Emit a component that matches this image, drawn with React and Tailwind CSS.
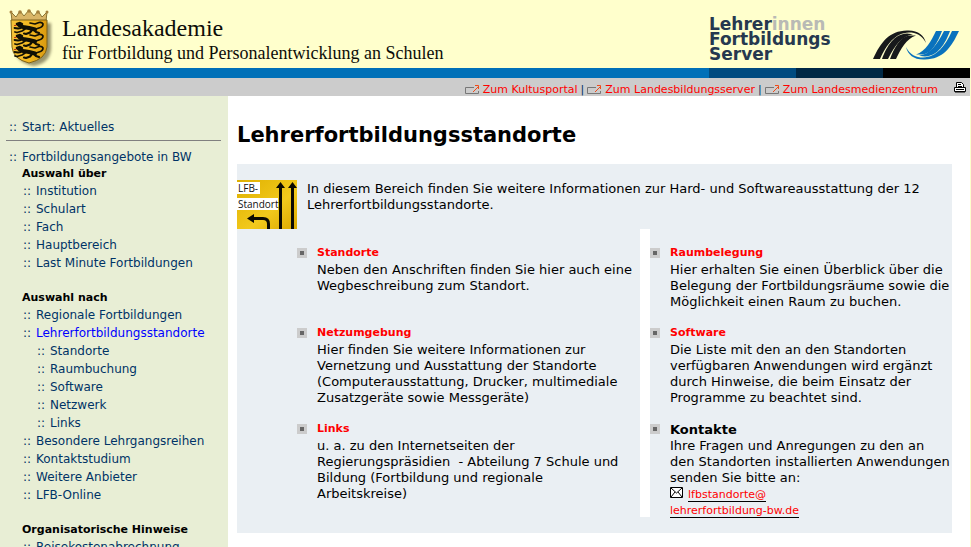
import React from "react";

const overview = ["Institution", "Schulart", "Fach", "Hauptbereich", "Last Minute Fortbildungen"];

const selection = [
  { label: "Regionale Fortbildungen" },
  {
    label: "Lehrerfortbildungsstandorte",
    active: true,
    children: ["Standorte", "Raumbuchung", "Software", "Netzwerk", "Links"],
  },
  { label: "Besondere Lehrgangsreihen" },
  { label: "Kontaktstudium" },
  { label: "Weitere Anbieter" },
  { label: "LFB-Online" },
];

const portals = ["Zum Kultusportal", "Zum Landesbildungsserver", "Zum Landesmedienzentrum"];

function Lion({ y }) {
  return (
    <g transform={`translate(0 ${y})`} fill="none" stroke="#111004" strokeLinecap="round" strokeLinejoin="round">
      <path d="M11 4 L15 6 L21 7 L27 8.500" strokeWidth="4" />
      <path d="M9 3 L12 2 L14 3" strokeWidth="2.500" />
      <path d="M13 7 L10 7.500 L6.500 7 M17 8 L14 10 L9 11.500 L7 11" strokeWidth="1.800" />
      <path d="M26 9 L28 11 L31 12 M24 9 L22 11.500 L18 13 L16 12.500" strokeWidth="2.200" />
      <path d="M28 8 L31 7 Q35 6 35 3 Q34 1 31 1.500 L27 3 L22 2" strokeWidth="1.700" />
      <path d="M6.500 4.500 L8 4.500" stroke="#c22d16" strokeWidth="1" />
    </g>
  );
}

function CoatOfArms() {
  return (
    <svg width="46" height="60" viewBox="0 0 46 60" aria-hidden="true">
      <defs>
        <linearGradient id="shield" x1="0" x2="1">
          <stop offset="0" stopColor="#f6c33a" />
          <stop offset="0.5" stopColor="#f4b91f" />
          <stop offset="1" stopColor="#d99a10" />
        </linearGradient>
        <filter id="soft" x="-20%" y="-20%" width="140%" height="140%">
          <feGaussianBlur stdDeviation="1.6" />
        </filter>
      </defs>
      <path d="M7 15 H43 V41 Q42 55 26 58 Q10 55 7 44 Z" fill="#77724e" opacity="0.75" filter="url(#soft)" />
      <path
        d="M4 13 L3 4 L8 9 L12 3 L16 8 L21 2 L26 8 L30 3 L34 9 L39 4 L38 13 Z"
        fill="#d9b566"
        stroke="#8b7431"
        strokeWidth="1"
      />
      <g fill="#a5803a">
        <circle cx="3" cy="4" r="1.500" />
        <circle cx="12" cy="4" r="1.800" />
        <circle cx="21" cy="3" r="1.800" />
        <circle cx="30" cy="4" r="1.800" />
        <circle cx="39" cy="4" r="1.500" />
      </g>
      <path d="M3 12 H39 V39 Q38 51 21 55 Q5 51 4 39 Z" fill="url(#shield)" stroke="#7c6118" strokeWidth="1" />
      <Lion y={13} />
      <Lion y={25} />
      <Lion y={37} />
    </svg>
  );
}

function SwooshHalf() {
  return (
    <>
      <path d="M0 29 C8 12 16 1 34 0.500 C45 0 51 5 53 13 C49 5 43 2.500 36 2.500 C22 3 14 14 7 29 Z" />
      <path d="M9 29 C14 16 21 4 34 3.500 L40 4.200 C29 6 22 15 15 29 Z" />
      <path d="M17 29 C21 18 27 7 36 5.500 L43 5.500 C33 9 28 19 23 29 Z" />
    </>
  );
}

function Swoosh() {
  return (
    <svg width="88" height="32" viewBox="0 0 88 32" aria-hidden="true">
      <g fill="#17191b">
        <SwooshHalf />
      </g>
      <g fill="#0a72bd" transform="rotate(180 43 15)">
        <SwooshHalf />
      </g>
    </svg>
  );
}

function ExternalIcon() {
  return (
    <svg width="15" height="10" viewBox="0 0 15 10" className="shrink-0" aria-hidden="true">
      <path d="M9 2.500 H0.500 V8.500 H13.500 V6" fill="none" stroke="#777" />
      <path d="M8 7 L13 2 M10 0.500 H13.500 V4" fill="none" stroke="#f04a18" />
    </svg>
  );
}

function PrinterIcon() {
  return (
    <svg width="12" height="11" viewBox="0 0 12 11" aria-hidden="true">
      <path d="M2.500 5 V0.500 H7.500 L9.500 2.500 V5" fill="#fff" stroke="#000" />
      <path d="M4 2.500 h3 M4 4.500 h4" stroke="#000" />
      <path d="M0.500 5.500 H11.500 V9.500 H0.500 Z" fill="#fff" stroke="#000" />
      <path d="M2 7.500 H10 M1 10 H11" stroke="#000" />
    </svg>
  );
}

function MailIcon() {
  return (
    <svg width="13" height="11" viewBox="0 0 13 11" className="mr-[5px] inline-block align-baseline" aria-hidden="true">
      <path d="M0.500 0.500 H12.500 V10.500 H0.500 Z" fill="#fff" stroke="#000" />
      <path d="M1 1 L6.500 6 L12 1 M1 10 L5 5 M12 10 L8 5" fill="none" stroke="#000" />
    </svg>
  );
}

function SignPicture() {
  return (
    <svg width="60" height="49" viewBox="0 0 60 49" role="img" aria-label="LFB-Standort" className="block">
      <defs>
        <linearGradient id="sign" x1="0" x2="1" y1="0" y2="1">
          <stop offset="0" stopColor="#dfb000" />
          <stop offset="0.6" stopColor="#f2c91c" />
          <stop offset="1" stopColor="#dba800" />
        </linearGradient>
      </defs>
      <rect width="60" height="49" fill="url(#sign)" />
      <path d="M0 2 h23 v12 h-23z M0 18 h41 v12 h-41z" fill="#fff" />
      <g fill="none" stroke="#0c0a02" strokeWidth="3">
        <path d="M43.500 49 V5 M55.500 49 V5" />
        <path d="M14 38.500 H26 Q31.500 38.500 31.500 44 V49" />
      </g>
      <path d="M39 8 L43.500 2 L48 8 Z M51 8 L55.500 2 L60 8 Z M17 34 L10 38.500 L17 43 Z" fill="#0c0a02" />
      <g fontFamily="'Open Sans', 'Liberation Sans', sans-serif" fontSize="10" fill="#111">
        <text x="1" y="12">LFB-</text>
        <text x="1" y="28">Standort</text>
      </g>
    </svg>
  );
}

function NavLink({ children, active }) {
  return (
    <a href="#" className="flex h-[18px] items-center">
      <span className="w-[13px] shrink-0">::</span>
      <span className={active ? "text-[#0000ff]" : ""}>{children}</span>
    </a>
  );
}

function NavHeading({ children }) {
  return <h2 className="ml-[13px] text-[11px] leading-4 font-bold text-black">{children}</h2>;
}

function Sidebar() {
  return (
    <nav className="w-[228px] shrink-0 bg-[#e8eed5] pt-[22px] pl-[9px] text-xs text-[#003366]">
      <NavLink>Start: Aktuelles</NavLink>
      <hr className="mt-1 mr-[7px] mb-[7px] -ml-[3px] border-[#808080]" />
      <NavLink>Fortbildungsangebote in BW</NavLink>
      <NavHeading>Auswahl über</NavHeading>
      <ul className="ml-[14px]">
        {overview.map((label) => (
          <li key={label}>
            <NavLink>{label}</NavLink>
          </li>
        ))}
      </ul>
      <div className="h-[18px]" />
      <NavHeading>Auswahl nach</NavHeading>
      <ul className="ml-[14px]">
        {selection.map((item) => (
          <li key={item.label}>
            <NavLink active={item.active}>{item.label}</NavLink>
            {item.children && (
              <ul className="ml-[14px]">
                {item.children.map((label) => (
                  <li key={label}>
                    <NavLink>{label}</NavLink>
                  </li>
                ))}
              </ul>
            )}
          </li>
        ))}
      </ul>
      <div className="h-[18px]" />
      <NavHeading>Organisatorische Hinweise</NavHeading>
      <div className="ml-[14px]">
        <NavLink>Reisekostenabrechnung</NavLink>
      </div>
    </nav>
  );
}

function Topic({ title, plain, children }) {
  return (
    <section className="flex">
      <span className="mt-[3px] flex h-[10px] w-[10px] shrink-0 items-center justify-center bg-[#cccccc]">
        <span className="h-1 w-1 bg-[#666666]" />
      </span>
      <div className="ml-[10px] whitespace-nowrap">
        {plain ? (
          <h2 className="pt-px font-bold">{title}</h2>
        ) : (
          <h2 className="mb-px text-[11px] leading-4 font-bold text-[#ff0000]">
            <a href="#">{title}</a>
          </h2>
        )}
        {children}
      </div>
    </section>
  );
}

export default function App() {
  return (
    <div className="flex h-screen flex-col overflow-hidden bg-[#ffffcc] pr-px font-['DejaVu_Sans',Verdana,sans-serif]">
      <header className="shrink-0">
        <div className="flex h-[68px] justify-between">
          <div className="flex pt-2 pl-2">
            <CoatOfArms />
            <div className="ml-2 font-['Liberation_Serif','Times_New_Roman',serif] text-[#0d0d08]">
              <p className="mt-2 text-2xl leading-6">Landesakademie</p>
              <p className="mt-px text-lg leading-6">für Fortbildung und Personalentwicklung an Schulen</p>
            </div>
          </div>
          <div className="flex w-[261px] justify-between pr-[9px]">
            <p className="pt-[17px] text-[17px] leading-[15px] font-bold text-[#26384f]">
              Lehrer<span className="text-[#b9bab5]">innen</span>
              <br />
              Fortbildungs
              <br />
              Server
            </p>
            <div className="pt-[30px]">
              <Swoosh />
            </div>
          </div>
        </div>
        <div className="flex h-[10px]">
          <div className="flex-1 bg-[#0070b8]" />
          <div className="w-[87px] bg-[#004b80]" />
          <div className="w-[87px] bg-[#002845]" />
          <div className="w-[87px] bg-black" />
        </div>
        <div className="flex h-[18px] items-center justify-end bg-[#cccccc] pr-1 text-[11px] leading-4 text-[#ff0000]">
          <div className="flex items-center pt-[5px]">
            {portals.map((label, i) => (
              <React.Fragment key={label}>
                {i > 0 && <span className="mx-[3px] text-[#003366]">|</span>}
                <a href="#" className="flex items-center gap-[3px]">
                  <ExternalIcon />
                  {label}
                </a>
              </React.Fragment>
            ))}
          </div>
          <a href="#" aria-label="Drucken" className="ml-4">
            <PrinterIcon />
          </a>
        </div>
      </header>

      <div className="flex flex-1">
        <Sidebar />
        <main className="flex-1 bg-white pr-[18px] pl-[9px]">
          <h1 className="pt-[26px] text-[21px] leading-[26px] font-bold">Lehrerfortbildungsstandorte</h1>
          <div className="mt-4 bg-[#eaeff3] pt-4 pb-4 text-[13px] leading-4 text-black">
            <div className="flex">
              <SignPicture />
              <p className="ml-[10px] pt-px whitespace-nowrap">
                In diesem Bereich finden Sie weitere Informationen zur Hard- und Softwareausstattung der 12
                <br />
                Lehrerfortbildungsstandorte.
              </p>
            </div>
            <div className="flex pl-[60px]">
              <div className="grid flex-1 grid-rows-[80px_96px_96px] content-start pt-4">
                <Topic title="Standorte">
                  <p>
                    Neben den Anschriften finden Sie hier auch eine
                    <br />
                    Wegbeschreibung zum Standort.
                  </p>
                </Topic>
                <Topic title="Netzumgebung">
                  <p>
                    Hier finden Sie weitere Informationen zur
                    <br />
                    Vernetzung und Ausstattung der Standorte
                    <br />
                    (Computerausstattung, Drucker, multimediale
                    <br />
                    Zusatzgeräte sowie Messgeräte)
                  </p>
                </Topic>
                <Topic title="Links">
                  <p>
                    u. a. zu den Internetseiten der
                    <br />
                    Regierungspräsidien&nbsp; - Abteilung 7 Schule und
                    <br />
                    Bildung (Fortbildung und regionale
                    <br />
                    Arbeitskreise)
                  </p>
                </Topic>
              </div>
              <div className="w-[10px] bg-white" />
              <div className="grid w-[302px] grid-rows-[80px_96px_96px] content-start pt-4">
                <Topic title="Raumbelegung">
                  <p>
                    Hier erhalten Sie einen Überblick über die
                    <br />
                    Belegung der Fortbildungsräume sowie die
                    <br />
                    Möglichkeit einen Raum zu buchen.
                  </p>
                </Topic>
                <Topic title="Software">
                  <p>
                    Die Liste mit den an den Standorten
                    <br />
                    verfügbaren Anwendungen wird ergänzt
                    <br />
                    durch Hinweise, die beim Einsatz der
                    <br />
                    Programme zu beachtet sind.
                  </p>
                </Topic>
                <Topic title="Kontakte" plain>
                  <p>
                    Ihre Fragen und Anregungen zu den an
                    <br />
                    den Standorten installierten Anwendungen
                    <br />
                    senden Sie bitte an:
                  </p>
                  <a href="#" className="block pt-px text-[11px] leading-4 text-[#ff0000]">
                    <MailIcon />
                    <span className="border-b border-black">lfbstandorte@</span>
                    <br />
                    <span className="border-b border-black">lehrerfortbildung-bw.de</span>
                  </a>
                </Topic>
              </div>
            </div>
          </div>
        </main>
      </div>
    </div>
  );
}
